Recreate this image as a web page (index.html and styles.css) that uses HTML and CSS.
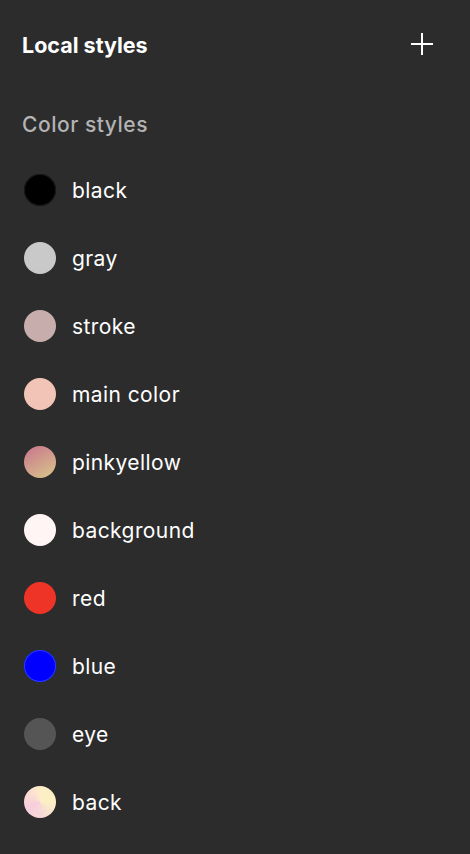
FILE: index.html
```html
<!DOCTYPE html>
<html>
<head>
<meta charset="utf-8">
<link rel="stylesheet" href="styles.css">
</head>
<body>
<div class="panel">
  <div class="header">
    <span class="title">Local styles</span>
    <svg class="plus" width="24" height="24" viewBox="0 0 24 24"><path d="M12 1V23M1 12H23" stroke="#fff" stroke-width="2" fill="none"/></svg>
  </div>
  <div class="section">Color styles</div>
  <ul class="list">
    <li class="item"><span class="swatch black"></span><span class="name">black</span></li>
    <li class="item"><span class="swatch gray"></span><span class="name">gray</span></li>
    <li class="item"><span class="swatch stroke"></span><span class="name">stroke</span></li>
    <li class="item"><span class="swatch main"></span><span class="name">main color</span></li>
    <li class="item"><span class="swatch pinkyellow"></span><span class="name">pinkyellow</span></li>
    <li class="item"><span class="swatch bg"></span><span class="name">background</span></li>
    <li class="item"><span class="swatch red"></span><span class="name">red</span></li>
    <li class="item"><span class="swatch blue"></span><span class="name">blue</span></li>
    <li class="item"><span class="swatch eye"></span><span class="name">eye</span></li>
    <li class="item"><span class="swatch back"></span><span class="name">back</span></li>
  </ul>
</div>
</body>
</html>
```
FILE: styles.css
```css
html, body {
  margin: 0;
  padding: 0;
  background: #2c2c2c;
  height: 100%;
}
body {
  font-family: Inter, "Noto Sans", sans-serif;
  color: #fff;
}
.panel {
  padding: 0 36px 0 22px;
}
.header {
  height: 88px;
  display: flex;
  align-items: center;
  justify-content: space-between;
}
.title {
  font-size: 21.5px;
  font-weight: 700;
  line-height: 24px;
  letter-spacing: 0;
  padding-top: 1px;
}
.plus {
  display: block;
}
.section {
  padding: 25px 0 19px;
  font-size: 21px;
  line-height: 24px;
  font-weight: 500;
  letter-spacing: 0.025em;
  color: #b3b3b3;
}
.list {
  list-style: none;
  margin: 0;
  padding: 0;
}
.item {
  height: 68px;
  display: flex;
  align-items: center;
  gap: 16px;
  padding-left: 2px;
}
.name {
  font-size: 21px;
  line-height: 24px;
  letter-spacing: 0.02em;
  padding-top: 2px;
}
.swatch {
  width: 32px;
  height: 32px;
  border-radius: 50%;
  flex: none;
}
.black { background: #000; box-shadow: inset 0 0 0 1px #1a1a1a; }
.gray { background: #c9c9c9; }
.stroke { background: #c8adad; }
.main { background: #f2c4b8; }
.pinkyellow { background: linear-gradient(150deg, #c9748c 0%, #d9c78c 100%); }
.bg { background: #fff5f4; }
.red { background: #ee3427; }
.blue { background: #0000ff; box-shadow: inset 0 0 0 1px #2a3cff; }
.eye { background: #555555; }
.back { background: conic-gradient(from 0deg, #fdeec6 0deg, #fcf0c3 90deg, #f6d8d8 180deg, #f7cddc 250deg, #fde3d0 330deg, #fdeec6 360deg); }
```
